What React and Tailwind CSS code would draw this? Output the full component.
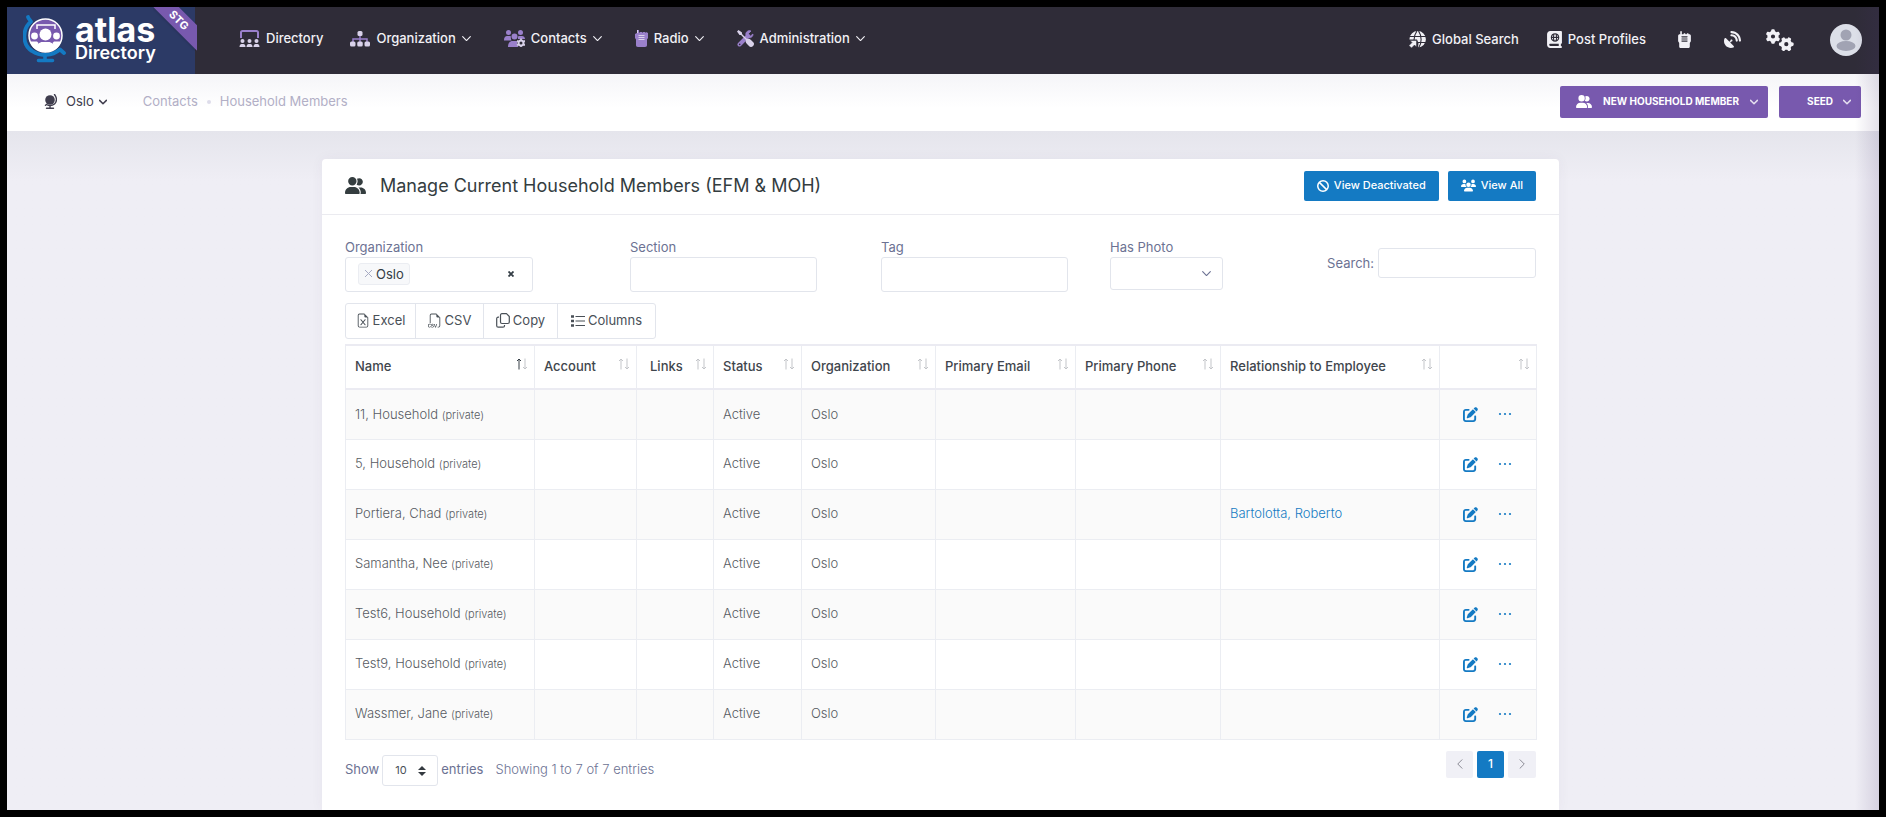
import { useState } from 'react';
import clsx from 'clsx';

//Icons
import { BsFileEarmarkExcel, BsFiletypeCsv } from 'react-icons/bs';
import {
  FaBan,
  FaBookAtlas,
  FaGears,
  FaPenToSquare,
  FaSatelliteDish,
  FaUserGroup,
  FaUsers,
  FaWalkieTalkie,
} from 'react-icons/fa6';

const columns = [
  { key: 'name', title: 'Name', width: 'w-[189px]' },
  { key: 'account', title: 'Account', width: 'w-[102px]' },
  { key: 'links', title: 'Links', width: 'w-[77px]' },
  { key: 'status', title: 'Status', width: 'w-[88px]' },
  { key: 'organization', title: 'Organization', width: 'w-[134px]' },
  { key: 'email', title: 'Primary Email', width: 'w-[140px]' },
  { key: 'phone', title: 'Primary Phone', width: 'w-[145px]' },
  { key: 'relationship', title: 'Relationship to Employee', width: 'w-[219px]' },
  { key: 'actions', title: '', width: 'w-[97px]' },
];

const members = [
  { name: '11, Household' },
  { name: '5, Household' },
  { name: 'Portiera, Chad', relationship: 'Bartolotta, Roberto' },
  { name: 'Samantha, Nee' },
  { name: 'Test6, Household' },
  { name: 'Test9, Household' },
  { name: 'Wassmer, Jane' },
];

const Chevron = ({ className }) => (
  <svg viewBox="0 0 8 8" className={className} fill="none" stroke="currentColor" strokeLinecap="round" strokeLinejoin="round" aria-hidden="true">
    <path d="M.6 2.400 4 5.800 7.400 2.400" />
  </svg>
);

const AtlasLogo = () => (
  <svg viewBox="0 0 44 48" className="h-12 w-11 shrink-0" aria-hidden="true">
    <path d="M5 2c.5 2 2 3 3 4.500C-1 14-1 30 9 36c9 6 20 5 28-1.500l4 3.500" fill="none" stroke="#147ac3" strokeWidth="3.800" strokeLinecap="round" strokeLinejoin="round" />
    <path d="M22 39v5M15.500 45.500h14" fill="none" stroke="#147ac3" strokeWidth="3.600" strokeLinecap="round" />
    <circle cx="22.500" cy="20.500" r="16.500" fill="#7859ae" stroke="#fff" strokeWidth="1.500" />
    <path d="M14 14V10h18v4" fill="none" stroke="#fff" strokeWidth="1.500" />
    <circle cx="22.500" cy="19.500" r="6" fill="#fff" />
    <circle cx="11.500" cy="21" r="3.400" fill="#fff" />
    <circle cx="33.500" cy="21" r="3.400" fill="#fff" />
    <path d="M7 26.500h7l1.500 1.500-2.500 6.500c-3-1.500-5-4.500-6-8zM38 26.500h-7L29.500 28l2.500 6.500c3-1.500 5-4.500 6-8z" fill="#fff" />
    <path d="M12.800 34c.7-5 3.700-7 6.700-7h6c3 0 6 2 6.700 7-5 4-14.400 4-19.400 0z" fill="#fff" />
  </svg>
);

const ScreenUsersIcon = () => (
  <svg viewBox="0 0 21 17" className="h-[17px] w-[21px]" aria-hidden="true">
    <path d="M2 8V2.500C2 1.500 2.500 1 3.500 1h14c1 0 1.500.5 1.500 1.500V8" fill="none" stroke="#9a80cb" strokeWidth="2" />
    <g fill="#d9d2ea">
      <circle cx="3.500" cy="11" r="2" />
      <circle cx="10.500" cy="11" r="2" />
      <circle cx="17.500" cy="11" r="2" />
      <path d="M.5 17c0-2 1-3 2-3h2c1 0 2 1 2 3zM7.500 17c0-2 1-3 2-3h2c1 0 2 1 2 3zM14.500 17c0-2 1-3 2-3h2c1 0 2 1 2 3z" />
    </g>
  </svg>
);

const SitemapIcon = () => (
  <svg viewBox="0 0 20 16" className="h-4 w-5" aria-hidden="true">
    <path d="M10 5v6M3 11V8h14v3" fill="none" stroke="#9a80cb" strokeWidth="1.500" />
    <g fill="#d9d2ea">
      <rect x="7.500" y="0" width="5" height="5" rx="1.500" />
      <rect x="0" y="10.500" width="5.500" height="5" rx="1.500" />
      <rect x="7.250" y="10.500" width="5.500" height="5" rx="1.500" />
      <rect x="14.500" y="10.500" width="5.500" height="5" rx="1.500" />
    </g>
  </svg>
);

const UsersGearIcon = () => (
  <svg viewBox="0 0 21 17" className="h-[17px] w-[21px]" aria-hidden="true">
    <g fill="#9a80cb">
      <circle cx="4.500" cy="2.500" r="2.500" />
      <circle cx="16.500" cy="2.500" r="2.500" />
      <circle cx="10.500" cy="6.500" r="3" />
      <path d="M0 10c0-2.500 1.500-4 3-4h3l1 .5c-.5 1.500 0 3 .5 4H0zM21 9c0-2-1.500-3-3-3h-3l-1 .5v2.500zM4 17c0-4 2-6 4.500-6h4l1 1c-1 2 0 3.500 1 5z" />
    </g>
    <circle cx="17" cy="13" r="2.500" fill="none" stroke="#d9d2ea" strokeWidth="2" />
    <path d="M17 8.500v2M17 15.500v2M13 10.700l1.700 1M19.300 14.300l1.700 1M13 15.300l1.700-1M19.300 11.700l1.700-1" stroke="#d9d2ea" strokeWidth="1.600" />
  </svg>
);

const RadioIcon = () => (
  <svg viewBox="0 0 13 17" className="h-[17px] w-[13px]" aria-hidden="true">
    <path d="M2 0h2v2.500h1V2h2v.5h1V2h2v.5h1V2l2 1v5l-1 1.500V15c0 1-.5 2-2 2H3c-1.500 0-2-1-2-2V9.500L0 8V4l2-1z" fill="#9a80cb" />
    <path d="M3.500 5.500h6M3.500 7.500h6M3.500 9.500h6" stroke="#d9d2ea" strokeWidth="1" />
    <path d="M2.500 0v3" stroke="#d9d2ea" />
  </svg>
);

const ToolsIcon = () => (
  <svg viewBox="0 0 17 17" className="h-[17px] w-[17px]" aria-hidden="true">
    <path d="M2.500 14.500 11 6" stroke="#9a80cb" strokeWidth="4" strokeLinecap="round" />
    <path d="M14 1a3.600 3.600 0 1 0 2 3l-2.500 2-2.500-2z" fill="#9a80cb" stroke="#9a80cb" strokeWidth=".8" strokeLinejoin="round" />
    <circle cx="2.700" cy="14.400" r=".8" fill="#2f2c38" />
    <path d="M0 1.500 1.500 0 5 2.500V4l5 5c1.500-.7 2.800-.3 4 1l2.500 2.500c.7 1 .7 2 0 3l-1 1c-1 .7-2 .7-3 0L10 14c-1.300-1.200-1.700-2.500-1-4L4 5H2.500z" fill="#d9d2ea" />
  </svg>
);

const GlobePointerIcon = () => (
  <svg viewBox="0 0 17 17" className="h-[17px] w-[17px]" fill="none" stroke="currentColor" aria-hidden="true">
    <path d="M.5 8a8.200 8.200 0 1 1 8.500 8.500L9.500 12 8 8.500H.5z" fill="currentColor" stroke="none" />
    <path d="M0 5.500h17M9 11.500h8M8 0C5 4 5 6 5 9M9.500 0c3.500 5 3.500 12 0 17" stroke="#2f2c38" strokeWidth="1.100" />
    <path d="M1 9.500h6.500V16l-2-2-3 3L0 14.500l3-3z" fill="currentColor" stroke="#2f2c38" strokeWidth=".5" />
  </svg>
);

const GlobeStandIcon = () => (
  <svg viewBox="0 0 13 15" className="h-[15px] w-[13px]" aria-hidden="true">
    <circle cx="6" cy="6" r="4.800" fill="currentColor" />
    <path d="M10.500.5 11.500 2c1.500 3 1 6-1 8-2.500 2-5.500 2-8 .500l-1 .8M6 11.500V14M2.500 14.200h7" fill="none" stroke="currentColor" strokeWidth="1.400" strokeLinecap="round" />
  </svg>
);

const CopyIcon = ({ className }) => (
  <svg viewBox="0 0 14 15" className={className} fill="none" stroke="currentColor" strokeWidth="1.200" strokeLinejoin="round" aria-hidden="true">
    <path d="M6 .7h4.500l2.800 2.800V9c0 1-.5 1.500-1.500 1.500H6c-1 0-1.500-.5-1.500-1.500V2.200C4.500 1.200 5 .7 6 .7z" />
    <path d="M3 4.200H2.200C1.200 4.200.7 4.700.7 5.700v7c0 1 .5 1.500 1.500 1.500H7c1 0 1.500-.5 1.500-1.500v-.7" />
  </svg>
);

const ListIcon = ({ className }) => (
  <svg viewBox="0 0 14 15" className={className} fill="none" stroke="currentColor" aria-hidden="true">
    <path d="M0 3.500h3M0 8h3M0 12.500h3" strokeWidth="2.400" />
    <path d="M4.500 3.500H14M4.500 8H14M4.500 12.500H14" strokeWidth="1.200" />
  </svg>
);

const SortArrows = ({ active }) => (
  <svg viewBox="0 0 12 12" className="h-3 w-3 shrink-0" fill="none" aria-hidden="true">
    <path d="M3 11.500V1M1 3l2-2 2 2" stroke={active ? '#343d45' : '#c3c5c9'} />
    <path d="M9 .5V11M7 9l2 2 2-2" stroke="#c3c5c9" />
  </svg>
);

const navItems = [
  { title: 'Directory', icon: ScreenUsersIcon, menu: false },
  { title: 'Organization', icon: SitemapIcon, menu: true },
  { title: 'Contacts', icon: UsersGearIcon, menu: true },
  { title: 'Radio', icon: RadioIcon, menu: true },
  { title: 'Administration', icon: ToolsIcon, menu: true },
];

const tools = [
  { title: 'Excel', icon: BsFileEarmarkExcel, className: 'w-[70px]' },
  { title: 'CSV', icon: BsFiletypeCsv, className: 'w-[68px]' },
  { title: 'Copy', icon: CopyIcon, className: 'w-[74px]' },
  { title: 'Columns', icon: ListIcon, className: 'w-[97px]' },
];

const Header = () => (
  <header className="flex h-[67px] shrink-0 items-stretch bg-[#2f2c38] text-white">
    {/* Logo */}
    <a href="#home" className="relative flex w-[188px] items-start bg-[#2c3a66] pt-2 pl-4">
      <AtlasLogo />
      <span className="ml-2 flex flex-col">
        <span className="text-[34px] leading-[30px] font-bold">atlas</span>
        <span className="text-lg leading-4 font-semibold">Directory</span>
      </span>
      <span className="absolute top-0 -right-[2px] h-11 w-11 overflow-hidden">
        <span className="absolute top-1 -left-[14px] w-20 rotate-45 bg-[#7859ae] text-center text-[11px] leading-[18px] font-bold shadow">STG</span>
      </span>
    </a>

    {/* Main menu */}
    <nav className="flex items-center gap-[33px] pb-1 pl-11 text-[13px] font-medium text-[#f2f1f6]">
      {navItems.map(({ title, icon: Icon, menu }) => (
        <button key={title} type="button" className={clsx('flex items-center gap-[6px]', !menu && '-mr-[6px]')}>
          <Icon />
          <span>{title}</span>
          {menu && <Chevron className="h-[9px] w-[9px]" />}
        </button>
      ))}
    </nav>

    {/* Quick links */}
    <div className="ml-auto flex items-center pb-[2px] pr-[17px] text-[13px] font-medium text-[#f2f1f6]">
      <button type="button" className="mr-7 flex items-center gap-[6px]">
        <GlobePointerIcon />
        Global Search
      </button>
      <button type="button" className="mr-8 flex items-center gap-[6px]">
        <FaBookAtlas className="h-[17px] w-[15px]" />
        Post Profiles
      </button>
      <button type="button" aria-label="Radio" className="mr-[33px]">
        <FaWalkieTalkie className="h-[17px] w-[13px]" />
      </button>
      <button type="button" aria-label="Satellite" className="mr-[25px]">
        <FaSatelliteDish className="h-[17px] w-[17px]" />
      </button>
      <button type="button" aria-label="Settings" className="mr-9">
        <FaGears className="h-6 w-7" />
      </button>
      <button type="button" aria-label="Account">
        <svg viewBox="0 0 32 32" className="h-8 w-8">
          <circle cx="16" cy="16" r="16" fill="#dcdfe8" />
          <circle cx="16" cy="11" r="5.500" fill="#a1a3b3" />
          <ellipse cx="16" cy="22" rx="9.500" ry="5" fill="#a1a3b3" />
        </svg>
      </button>
    </div>
  </header>
);

const SubHeader = () => (
  <div className="flex h-[57px] shrink-0 items-center bg-linear-to-b from-[#f5f5f8] to-white to-60% pb-[2px] pr-[18px] pl-[37px] text-[13px]">
    <button type="button" className="flex items-center text-[#3f3d4d]">
      <GlobeStandIcon />
      <span className="ml-[9px]">Oslo</span>
      <Chevron className="ml-[5px] h-2 w-2 stroke-[1.5]" />
    </button>
    <nav className="ml-9 flex items-center gap-[9px] text-[#b2afc6]">
      <a href="#contacts">Contacts</a>
      <span className="h-1 w-1 rounded-full bg-[#dddcea]" />
      <a href="#household">Household Members</a>
    </nav>
    <div className="ml-auto flex gap-[11px] text-[10px] font-bold text-white">
      <button type="button" className="flex h-8 items-center rounded-[2px] bg-[#7859ae] px-[10px]">
        <FaUserGroup className="mr-[11px] ml-[6px] h-[13px] w-4" />
        NEW HOUSEHOLD MEMBER
        <Chevron className="ml-[11px] h-2 w-2 stroke-[1.5] opacity-80" />
      </button>
      <button type="button" className="flex h-8 w-[82px] items-center justify-end rounded-[2px] bg-[#7859ae] px-[10px]">
        SEED
        <Chevron className="ml-[10px] h-2 w-2 stroke-[1.5] opacity-80" />
      </button>
    </div>
  </div>
);

const Filters = () => {

  const [organization, setOrganization] = useState('Oslo');

  return (
    <div className="flex items-start text-[13px] leading-5 text-[#6c7293]">
      {/* Organization */}
      <div className="mr-[97px] w-[188px]">
        <label htmlFor="organization" className="block">Organization</label>
        <div className="flex h-[35px] items-center rounded-[3px] border border-[#e2e5ec] pr-[18px] pb-[2px] pl-3">
          {organization && (
            <span className="flex h-[22px] shrink-0 items-center gap-[3px] rounded-[3px] border border-[#ebedf2] bg-[#f7f8fa] px-[5px] text-[#343d45]">
              <button type="button" aria-label="Remove Oslo" className="text-[#a7abc3]" onClick={() => setOrganization('')}>
                <svg viewBox="0 0 9 9" className="h-[9px] w-[9px]" stroke="currentColor"><path d="M1 1l7 7M8 1 1 8" /></svg>
              </button>
              {organization}
            </span>
          )}
          <input id="organization" type="text" className="w-0 flex-1 outline-none" />
          <button type="button" aria-label="Clear organization" className="text-[#343d45]" onClick={() => setOrganization('')}>
            <svg viewBox="0 0 6 6" className="h-[6px] w-[6px]" stroke="currentColor" strokeWidth="1.800"><path d="M.5.5l5 5M5.500.5l-5 5" /></svg>
          </button>
        </div>
      </div>

      {/* Section */}
      <div className="mr-16 w-[187px]">
        <label htmlFor="section" className="block">Section</label>
        <input id="section" type="text" className="block h-[35px] w-full rounded-[3px] border border-[#e2e5ec] px-3 outline-none" />
      </div>

      {/* Tag */}
      <div className="mr-[42px] w-[187px]">
        <label htmlFor="tag" className="block">Tag</label>
        <input id="tag" type="text" className="block h-[35px] w-full rounded-[3px] border border-[#e2e5ec] px-3 outline-none" />
      </div>

      {/* Has photo */}
      <div className="w-[113px]">
        <label htmlFor="hasPhoto" className="block">Has Photo</label>
        <div className="relative">
          <select id="hasPhoto" className="block h-[33px] w-full appearance-none rounded-[3px] border border-[#e2e5ec] px-3 outline-none">
            <option value=""></option>
            <option value="yes">Yes</option>
            <option value="no">No</option>
          </select>
          <Chevron className="pointer-events-none absolute top-3 right-3 h-[9px] w-[9px]" />
        </div>
      </div>

      {/* Search */}
      <div className="mt-[11px] ml-auto flex items-center gap-1">
        <label htmlFor="search">Search:</label>
        <input id="search" type="search" className="h-[30px] w-[158px] rounded-[3px] border border-[#e2e5ec] px-3 outline-none" />
      </div>
    </div>
  );
};

const MembersTable = () => (
  <table className="mt-[5px] w-full table-fixed border-collapse border border-[#ebedf2] text-left text-[13px] text-[#575b62]">
    <thead>
      <tr className="h-11 border-y-2 border-[#ebebf2] text-[#3f464d]">
        {columns.map((column, index) => (
          <th key={column.key} scope="col" className={clsx('border-x border-[#ebedf2] pr-[6px] pl-[9px] font-medium', column.width)}>
            <div className={clsx('flex items-center justify-between whitespace-nowrap', column.key === 'links' && 'pl-1')}>
              {column.title}
              <button type="button" aria-label={'Sort by ' + (column.title || 'actions')} className="mb-[6px] ml-auto">
                <SortArrows active={index === 0} />
              </button>
            </div>
          </th>
        ))}
      </tr>
    </thead>
    <tbody className="font-light">
      {members.map((member) => (
        <tr key={member.name} className="h-[50px] border-b border-[#ebedf2] odd:bg-[#fafafa]">
          <td className="border-x border-[#ebedf2] px-[9px] whitespace-nowrap">
            {member.name} <span className="text-[11px]">(private)</span>
          </td>
          <td className="border-x border-[#ebedf2]" />
          <td className="border-x border-[#ebedf2]" />
          <td className="border-x border-[#ebedf2] px-[9px]">Active</td>
          <td className="border-x border-[#ebedf2] px-[9px]">Oslo</td>
          <td className="border-x border-[#ebedf2]" />
          <td className="border-x border-[#ebedf2]" />
          <td className="border-x border-[#ebedf2] px-[9px]">
            {member.relationship && <a href="#employee" className="text-[#147ac3]">{member.relationship}</a>}
          </td>
          <td className="border-x border-[#ebedf2]">
            <div className="flex items-center justify-center gap-5 pr-[2px] text-[#147ac3]">
              <button type="button" aria-label={'Edit ' + member.name}>
                <FaPenToSquare className="h-[15px] w-[15px]" />
              </button>
              <button type="button" aria-label={'More for ' + member.name}>
                <svg viewBox="0 0 14 4" className="h-1 w-[14px]" fill="currentColor">
                  <circle cx="2" cy="2" r="1.100" />
                  <circle cx="7" cy="2" r="1.100" />
                  <circle cx="12" cy="2" r="1.100" />
                </svg>
              </button>
            </div>
          </td>
        </tr>
      ))}
    </tbody>
  </table>
);

const TableFooter = () => (
  <div className="mt-[11px] flex items-start text-[13px] text-[#6c7293]">
    <div className="mt-1 flex items-center">
      <label htmlFor="pageSize" className="mr-[3px]">Show</label>
      <div className="relative">
        <select id="pageSize" defaultValue="10" className="h-[31px] w-14 appearance-none rounded-[3px] border border-[#e2e5ec] pl-3 text-[11px] text-[#495057] outline-none">
          <option value="10">10</option>
          <option value="25">25</option>
          <option value="50">50</option>
        </select>
        <svg viewBox="0 0 8 10" className="pointer-events-none absolute top-[11px] right-3 h-[10px] w-2" fill="#343a40" aria-hidden="true">
          <path d="M0 4 4 0l4 4zM0 6l4 4 4-4z" />
        </svg>
      </div>
      <span className="ml-[3px]">entries</span>
      <span className="ml-3 font-light">Showing 1 to 7 of 7 entries</span>
    </div>
    <div className="ml-auto flex gap-1 text-[#8b8b95]">
      <button type="button" aria-label="Previous page" className="flex h-[27px] w-[27px] items-center justify-center rounded-[2px] bg-[#f0f0f6]">
        <Chevron className="h-[10px] w-[10px] rotate-90 stroke-[0.8]" />
      </button>
      <button type="button" className="h-[27px] w-[27px] rounded-[2px] bg-[#147ac3] text-xs font-medium text-white">1</button>
      <button type="button" aria-label="Next page" className="flex h-[27px] w-7 items-center justify-center rounded-[2px] bg-[#f0f0f6]">
        <Chevron className="h-[10px] w-[10px] -rotate-90 stroke-[0.8]" />
      </button>
    </div>
  </div>
);

const App = () => (
  <div className="h-screen bg-black p-[7px] font-['Inter','Open_Sans',sans-serif]">
    <div className="relative flex h-full flex-col overflow-hidden bg-[#efeef5]">
      <Header />
      <SubHeader />

      <main className="flex flex-1 justify-center bg-linear-to-b from-[#e5e5ec] to-[#efeef5] to-[50px] px-6 pt-7 pr-[29px]">
        <section className="min-h-full w-full max-w-[1237px] rounded-t-[4px] bg-white shadow-[0_0_13px_rgba(82,63,105,0.05)]">
          {/* Card heading */}
          <div className="flex h-14 items-center border-b border-[#ebebf0] px-[23px] pb-[2px]">
            <FaUserGroup className="mr-[14px] h-[17px] w-[21px] text-[#343d3f]" />
            <h1 className="text-lg text-[#343d3f]">Manage Current Household Members (EFM &amp; MOH)</h1>
            <div className="ml-auto flex gap-[9px] text-[11px] font-medium text-white">
              <button type="button" className="flex h-[30px] items-center gap-[5px] rounded-[2px] bg-[#147ac3] px-[13px]">
                <FaBan className="h-3 w-3" />
                View Deactivated
              </button>
              <button type="button" className="flex h-[30px] items-center gap-[5px] rounded-[2px] bg-[#147ac3] px-[13px]">
                <FaUsers className="h-[13px] w-[15px]" />
                View All
              </button>
            </div>
          </div>

          <div className="px-[23px] pt-[22px]">
            <Filters />

            {/* Export buttons */}
            <div className="mt-[11px] inline-flex h-9 divide-x divide-[#e2e5ec] rounded-[3px] border border-[#e2e5ec] text-[13px] text-[#495057]">
              {tools.map(({ title, icon: Icon, className }) => (
                <button key={title} type="button" className={clsx('flex items-center justify-center gap-[3px]', className)}>
                  <Icon className="mb-[2px] h-[15px] w-[14px]" />
                  {title}
                </button>
              ))}
            </div>

            <MembersTable />
            <TableFooter />
          </div>
        </section>
      </main>

      {/* Shade along the right edge */}
      <div className="pointer-events-none absolute inset-y-0 right-0 w-6 bg-linear-to-r from-transparent to-[#46326e]/15" />
    </div>
  </div>
);

export default App;
